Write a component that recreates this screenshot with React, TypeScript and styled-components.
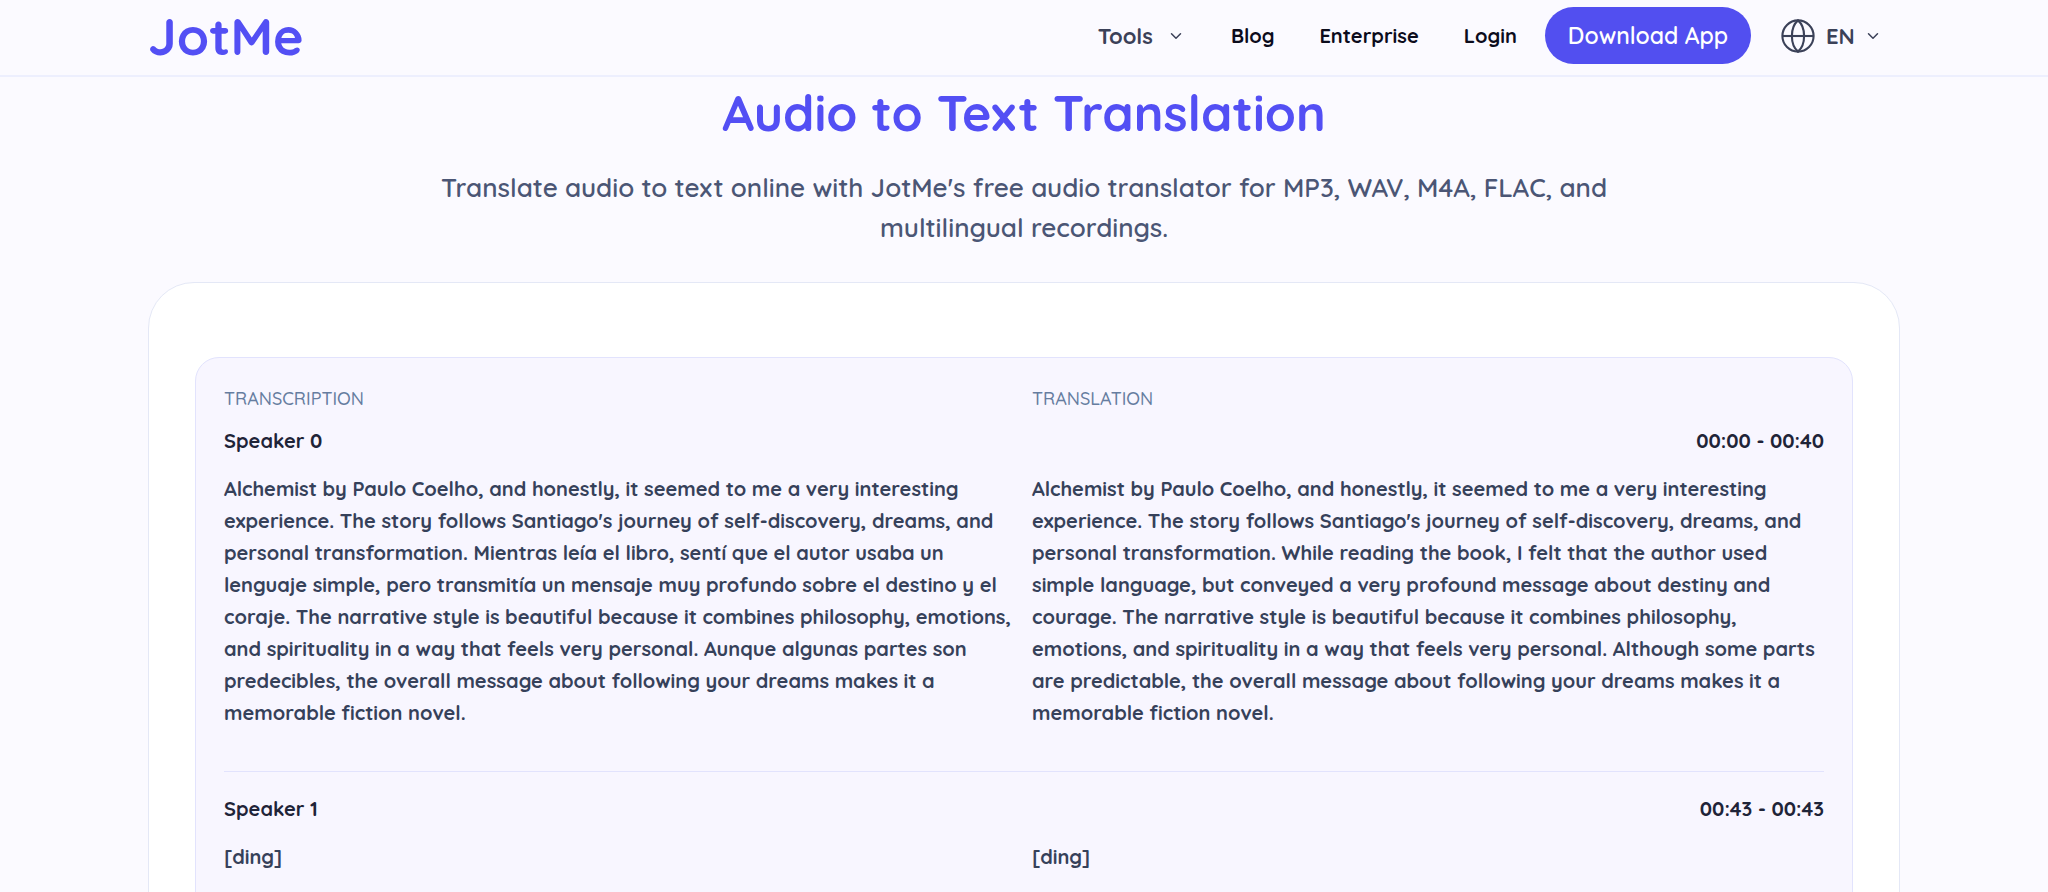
import React from 'react';
import styled, { createGlobalStyle } from 'styled-components';

const colors = {
  page: '#fbfaff',
  brand: '#524ff0',
  brandText: '#534ff4',
  line: '#edeffe',
  cardLine: '#e4e8f6',
  panel: '#f8f6ff',
  panelLine: '#e2e3fd',
  ink: '#1f2438',
  body: '#36415a',
  muted: '#4b5675',
  label: '#667da0',
  nav: '#3b4158',
};

const GlobalStyle = createGlobalStyle`
  *, *::before, *::after { box-sizing: border-box; }
  html, body, #root { height: 100%; }
  body {
    margin: 0;
    background: ${colors.page};
    color: ${colors.ink};
    font-family: "Quicksand", "Open Sans", sans-serif;
    -webkit-font-smoothing: antialiased;
  }
  h1, h2, h3, p { margin: 0; }
`;

const Page = styled.div`
  display: flex;
  flex-direction: column;
  height: 100%;
  overflow: hidden;
`;

const Header = styled.header`
  flex: none;
  padding: 7px 24px 11px;
  border-bottom: 2px solid ${colors.line};
`;

const HeaderInner = styled.div`
  display: flex;
  align-items: center;
  justify-content: space-between;
  max-width: 1752px;
  margin: 0 auto;
  padding-right: 20px;
`;

const Logo = styled.a`
  color: ${colors.brandText};
  font-size: 52px;
  font-weight: 700;
  line-height: 56px;
  text-decoration: none;
`;

const Actions = styled.div`
  display: flex;
  align-items: center;
  gap: 28px;
`;

const Nav = styled.nav`
  display: flex;
  align-items: center;
  gap: 45px;
`;

const MenuButton = styled.button`
  display: flex;
  align-items: center;
  gap: 16px;
  padding: 0 3px 0 0;
  border: 0;
  background: none;
  color: ${colors.nav};
  font: inherit;
  font-size: 22px;
  font-weight: 700;
  line-height: 28px;
  cursor: pointer;
`;

const NavLink = styled.a`
  color: #0c0c1c;
  font-size: 20px;
  font-weight: 700;
  line-height: 28px;
  text-decoration: none;
`;

const DownloadButton = styled.button`
  height: 57px;
  padding: 0 23px;
  border: 0;
  border-radius: 29px;
  background: ${colors.brand};
  color: #fff;
  font: inherit;
  font-size: 23px;
  font-weight: 600;
  cursor: pointer;
`;

const LanguagePicker = styled.label`
  display: flex;
  align-items: center;
  gap: 11px;
  padding-left: 2px;
  color: ${colors.nav};
`;

const LanguageSelect = styled.select`
  appearance: none;
  padding: 0;
  border: 0;
  background: none;
  color: inherit;
  font: inherit;
  font-size: 22px;
  font-weight: 700;
  line-height: 28px;
  cursor: pointer;
`;

const Main = styled.main`
  flex: 1 0 auto;
  width: 100%;
  max-width: 1800px;
  margin: 0 auto;
  padding: 6px 24px 48px;
`;

const Title = styled.h1`
  color: ${colors.brandText};
  font-size: 50px;
  font-weight: 700;
  line-height: 60px;
  text-align: center;
`;

const Subtitle = styled.p`
  max-width: 1240px;
  margin: 25px auto 34px;
  color: ${colors.muted};
  font-size: 26px;
  font-weight: 600;
  line-height: 40px;
  text-align: center;
`;

const Card = styled.section`
  padding: 74px 46px 46px;
  border: 1px solid ${colors.cardLine};
  border-radius: 46px;
  background: #fff;
`;

const Panel = styled.div`
  padding: 28px 28px 0;
  border: 1px solid ${colors.panelLine};
  border-radius: 24px;
  background: ${colors.panel};
`;

const Columns = styled.div`
  display: grid;
  grid-template-columns: 1fr 1fr;
  gap: 16px;
`;

const ColumnLabel = styled.h2`
  color: ${colors.label};
  font-size: 18px;
  font-weight: 500;
  line-height: 26px;
  text-transform: uppercase;
`;

const Segment = styled.article<{ $divided: boolean }>`
  padding: ${(p) => (p.$divided ? '23px' : '15px')} 0 42px;
  border-top: ${(p) => (p.$divided ? `1px solid ${colors.panelLine}` : '0')};
`;

const SegmentHead = styled.div`
  display: flex;
  justify-content: space-between;
  margin-bottom: 18px;
  font-size: 20px;
  font-weight: 700;
  line-height: 28px;
`;

const Speaker = styled.h3`
  font: inherit;
`;

const Passage = styled.p`
  color: ${colors.body};
  font-size: 20px;
  font-weight: 700;
  line-height: 32px;
`;

const ChevronIcon = () => (
  <svg width="14" height="14" viewBox="0 0 14 14" fill="none" stroke="currentColor" strokeWidth="1.5" strokeLinecap="round" strokeLinejoin="round" aria-hidden="true">
    <path d="M2.5 4.8 7 9.3l4.5-4.5" />
  </svg>
);

const GlobeIcon = () => (
  <svg width="34" height="34" viewBox="0 0 34 34" fill="none" stroke="currentColor" strokeWidth="2.1" aria-hidden="true">
    <circle cx="17" cy="17" r="15.6" />
    <path d="M17 1.4C13 4.8 10.9 10.4 10.9 17S13 29.2 17 32.6C21 29.2 23.1 23.6 23.1 17S21 4.8 17 1.4Z" />
    <path d="M1.4 17h31.2" />
  </svg>
);

const links = ['Blog', 'Enterprise', 'Login'];

const segments = [
  {
    speaker: 'Speaker 0',
    time: '00:00 - 00:40',
    original:
      "Alchemist by Paulo Coelho, and honestly, it seemed to me a very interesting experience. The story follows Santiago's journey of self-discovery, dreams, and personal transformation. Mientras leía el libro, sentí que el autor usaba un lenguaje simple, pero transmitía un mensaje muy profundo sobre el destino y el coraje. The narrative style is beautiful because it combines philosophy, emotions, and spirituality in a way that feels very personal. Aunque algunas partes son predecibles, the overall message about following your dreams makes it a memorable fiction novel.",
    translated:
      "Alchemist by Paulo Coelho, and honestly, it seemed to me a very interesting experience. The story follows Santiago's journey of self-discovery, dreams, and personal transformation. While reading the book, I felt that the author used simple language, but conveyed a very profound message about destiny and courage. The narrative style is beautiful because it combines philosophy, emotions, and spirituality in a way that feels very personal. Although some parts are predictable, the overall message about following your dreams makes it a memorable fiction novel.",
  },
  { speaker: 'Speaker 1', time: '00:43 - 00:43', original: '[ding]', translated: '[ding]' },
];

export default function App() {
  return (
    <Page>
      <GlobalStyle />
      <Header>
        <HeaderInner>
          <Logo href="#">JotMe</Logo>
          <Actions>
            <Nav>
              <MenuButton type="button" aria-haspopup="menu">
                Tools
                <ChevronIcon />
              </MenuButton>
              {links.map((link) => (
                <NavLink key={link} href={`#${link.toLowerCase()}`}>
                  {link}
                </NavLink>
              ))}
            </Nav>
            <DownloadButton type="button">Download App</DownloadButton>
            <LanguagePicker>
              <GlobeIcon />
              <LanguageSelect aria-label="Language">
                <option>EN</option>
              </LanguageSelect>
              <ChevronIcon />
            </LanguagePicker>
          </Actions>
        </HeaderInner>
      </Header>
      <Main>
        <Title>Audio to Text Translation</Title>
        <Subtitle>
          Translate audio to text online with JotMe's free audio translator for MP3, WAV, M4A, FLAC, and multilingual
          recordings.
        </Subtitle>
        <Card>
          <Panel>
            <Columns>
              <ColumnLabel>Transcription</ColumnLabel>
              <ColumnLabel>Translation</ColumnLabel>
            </Columns>
            {segments.map((segment, index) => (
              <Segment key={segment.speaker} $divided={index > 0}>
                <SegmentHead>
                  <Speaker>{segment.speaker}</Speaker>
                  <time>{segment.time}</time>
                </SegmentHead>
                <Columns>
                  <Passage>{segment.original}</Passage>
                  <Passage>{segment.translated}</Passage>
                </Columns>
              </Segment>
            ))}
          </Panel>
        </Card>
      </Main>
    </Page>
  );
}
